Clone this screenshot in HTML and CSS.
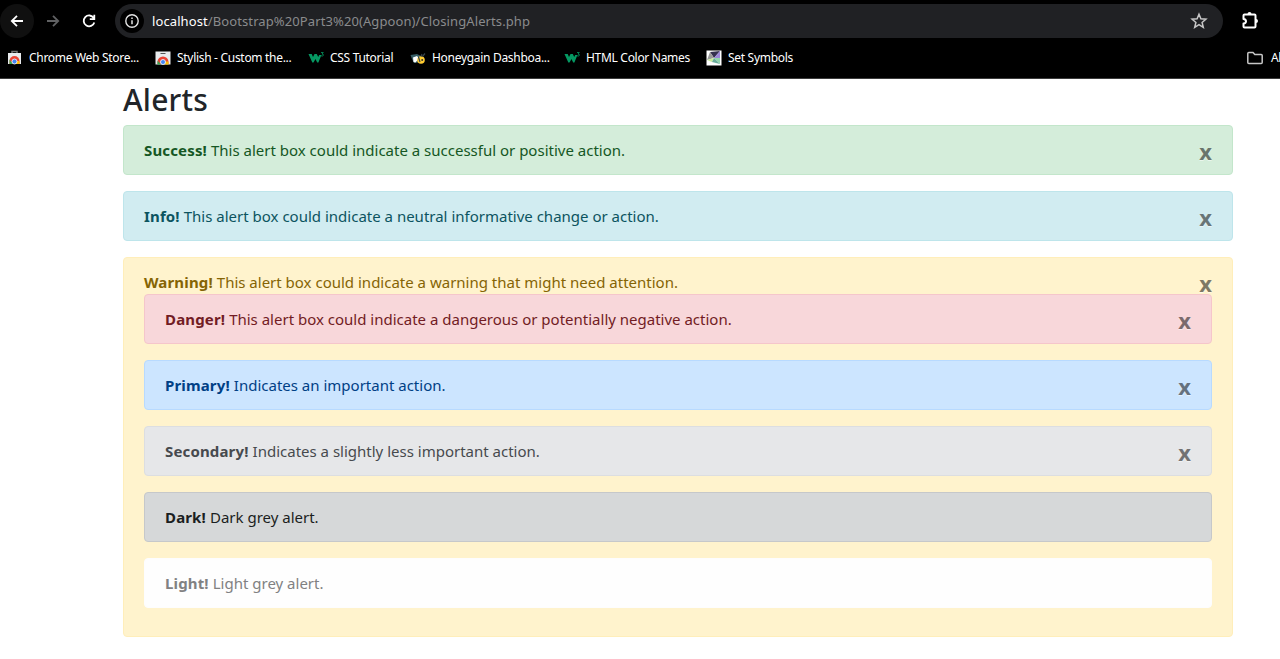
FILE: index.html
```html
<!DOCTYPE html>
<html lang="en">
<head>
<meta charset="utf-8">
<title>Alerts</title>
<link rel="stylesheet" href="styles.css">
</head>
<body>
<header class="browser">
  <div class="toolbar">
    <span class="nav-btn nav-back"><svg width="16" height="16" viewBox="0 0 16 16"><path d="M14 8H3M8 2.800 2.800 8 8 13.200" fill="none" stroke="#fff" stroke-width="1.800"/></svg></span>
    <span class="nav-btn"><svg width="16" height="16" viewBox="0 0 16 16"><path d="M2 8h11M8 2.800 13.200 8 8 13.200" fill="none" stroke="#606163" stroke-width="1.800"/></svg></span>
    <span class="nav-btn"><svg width="16" height="16" viewBox="0 0 16 16"><path d="M12.700 5A5.400 5.400 0 1 0 13.300 9.400M13.300 1.800V6.200H8.800" fill="none" stroke="#fff" stroke-width="1.800"/></svg></span>
    <div class="omnibox">
      <span class="site-info"><svg width="16" height="16" viewBox="0 0 16 16"><circle cx="8" cy="8" r="6.200" fill="none" stroke="#e3e3e3" stroke-width="1.400"/><path d="M8 7.200v4M8 4.500v1.500" stroke="#e3e3e3" stroke-width="1.500"/></svg></span>
      <span class="url"><span>localhost</span><span class="path">/Bootstrap%20Part3%20(Agpoon)/ClosingAlerts.php</span></span>
      <svg width="18" height="18" viewBox="0 0 18 18"><path d="M9 2.200l1.900 4.600 5 .4-3.800 3.200 1.200 4.900L9 12.700l-4.300 2.600 1.200-4.900L2.100 7.200l5-.4z" fill="none" stroke="#c7c7c7" stroke-width="1.500"/></svg>
    </div>
    <svg class="puzzle" width="20" height="20" viewBox="0 0 20 20"><path d="M4.500 3.500h10q1 0 1 1v11q0 1-1 1h-10q-1 0-1-1v-3q2.500-.3 2.500-2.300t-2.500-2.300V4.500q0-1 1-1z" fill="none" stroke="#fff" stroke-width="2" stroke-linejoin="round"/><path d="M7.500 3a2 2 0 0 1 4 0zM16 8a2 2 0 0 1 0 4z" fill="#fff"/></svg>
  </div>
  <nav class="bookmarks">
    <a class="bm bm1"><svg width="16" height="16" viewBox="0 0 16 16"><path d="M5 3V1.500h5V3" fill="none" stroke="#777" stroke-width="1.500"/><path d="M1 3h13v11H1z" fill="#e8eaed"/><path d="M2.500 14V11a5 5 0 0 1 10 0v3z" fill="#ea4335"/><path d="M2.500 9.500 6 14H2.500z" fill="#34a853"/><path d="M9 11h3.500v3H8z" fill="#fbbc04"/><circle cx="7.500" cy="11.500" r="2.500" fill="#4285f4" stroke="#fff" stroke-width=".8"/></svg><span>Chrome Web Store...</span></a>
    <a class="bm bm2"><svg width="16" height="16" viewBox="0 0 16 16"><path d="M.500 1.500h15v13H.500z" fill="#e8eaed"/><path d="M5.500 3h5v1h-5z" fill="#555"/><path d="M2.500 14V12a5.500 5.500 0 0 1 11 0v2z" fill="#ea4335"/><path d="M2.500 10.500 6 14.500H2.500z" fill="#34a853"/><path d="M10 11.500h3.500v3H9z" fill="#fbbc04"/><circle cx="8" cy="12" r="2.500" fill="#4285f4" stroke="#fff" stroke-width=".8"/></svg><span>Stylish - Custom the...</span></a>
    <a class="bm bm3"><svg width="16" height="16" viewBox="0 0 16 16"><path d="M.500 4h3.200l1.300 3 1.500-3h2.300l1.400 3 1-2h2.200l-3 7.500h-1.200L7.500 9l-2 3.500H4.300z" fill="#059862"/><path d="M13 2.500h2.300l-1.300 1.500q1.800 0 1.300 1.500-.8 1-2.300.3" fill="none" stroke="#059862" stroke-width=".8"/></svg><span>CSS Tutorial</span></a>
    <a class="bm bm4"><svg width="16" height="16" viewBox="0 0 16 16"><path d="M.500 5 7 4l4 2-3 6.500-4 .5-2-4z" fill="#365d65"/><path d="M3 7.500l4-1.500 2 2.500-3.500 4-2-.5z" fill="#fff"/><ellipse cx="11" cy="10" rx="3.800" ry="3.800" fill="#ffcc32"/><path d="M8.500 7l1.500 5M12 4l-1 2.500M15 3.500l-2.500 3" stroke="#34424b" stroke-width="1.200"/><circle cx="12.200" cy="10" r="1" fill="#333"/></svg><span>Honeygain Dashboa...</span></a>
    <a class="bm bm5"><svg width="16" height="16" viewBox="0 0 16 16"><path d="M.500 4h3.200l1.300 3 1.500-3h2.300l1.400 3 1-2h2.200l-3 7.500h-1.200L7.500 9l-2 3.500H4.300z" fill="#059862"/><path d="M13 2.500h2.300l-1.300 1.500q1.800 0 1.300 1.500-.8 1-2.300.3" fill="none" stroke="#059862" stroke-width=".8"/></svg><span>HTML Color Names</span></a>
    <a class="bm bm6"><svg width="16" height="16" viewBox="0 0 16 16"><path d="M.500.500h15v15H.500z" fill="#fff"/><path d="M4 2l10-1-6 7z" fill="#34304f"/><path d="M14 1 8 8l6 0z" fill="#9c88d8"/><path d="M4 2l4 6-7 2z" fill="#9a9a9a"/><path d="M1 10l7-2-2 4z" fill="#c8ee9c"/><path d="M8 8h6v6z" fill="#93d6ae"/><path d="M8 8l6 6-8-2z" fill="#68ac9a"/><path d="M1 10l5 2 8 3z" fill="#c79bd4"/></svg><span>Set Symbols</span></a>
    <a class="bm all"><svg width="18" height="16" viewBox="0 0 18 16"><path d="M1.800 3.500q0-1 1-1H7l1.800 2h6.400q1 0 1 1v7q0 1-1 1H2.800q-1 0-1-1z" fill="none" stroke="#c7c7c7" stroke-width="1.500"/></svg><span>Al</span></a>
  </nav>
</header>
<main class="container">
  <h2>Alerts</h2>
  <div class="alert success"><button class="close">x</button><strong>Success!</strong><span class="msg">This alert box could indicate a successful or positive action.</span></div>
  <div class="alert info"><button class="close">x</button><strong>Info!</strong><span class="msg">This alert box could indicate a neutral informative change or action.</span></div>
  <div class="alert warning"><button class="close">x</button><strong>Warning!</strong><span class="msg">This alert box could indicate a warning that might need attention.</span>
    <div class="alert danger"><button class="close">x</button><strong>Danger!</strong><span class="msg">This alert box could indicate a dangerous or potentially negative action.</span></div>
    <div class="alert primary"><button class="close">x</button><strong>Primary!</strong><span class="msg">Indicates an important action.</span></div>
    <div class="alert secondary"><button class="close">x</button><strong>Secondary!</strong><span class="msg">Indicates a slightly less important action.</span></div>
    <div class="alert dark"><strong>Dark!</strong><span class="msg">Dark grey alert.</span></div>
    <div class="alert light"><strong>Light!</strong><span class="msg">Light grey alert.</span></div>
  </div>
</main>
</body>
</html>
```
FILE: styles.css
```css
* { box-sizing: border-box; }
body { margin: 0; height: 659px; overflow: hidden; background: #fff; color: #212529; font: 15px/24px "Noto Sans", "Open Sans", sans-serif; }
svg { display: block; flex: none; }
.browser { height: 79px; background: #000; border-bottom: 1px solid #3c3c3c; color: #fff; overflow: hidden; }
.toolbar { display: flex; align-items: center; height: 34px; margin-top: 4px; }
.nav-btn { display: flex; align-items: center; justify-content: center; width: 34px; height: 34px; margin-right: 2px; border-radius: 50%; }
.nav-back { background: #101010; }
.omnibox { display: flex; align-items: center; width: 1108px; height: 34px; margin-left: 7px; padding: 0 15px 0 5px; border-radius: 17px; background: #202124; }
.site-info { display: flex; align-items: center; justify-content: center; width: 24px; height: 24px; border-radius: 50%; background: #000; }
.url { display: flex; flex: 1; margin-left: 8px; font-size: 13px; letter-spacing: .1px; white-space: pre; }
.path { color: #8a8b8d; }
.puzzle { margin-left: 17px; }
.bookmarks { display: flex; align-items: center; height: 40px; font-size: 12px; line-height: 16px; letter-spacing: -.3px; white-space: pre; }
.bm { display: flex; align-items: center; gap: 6px; flex: none; }
.bm1 { margin-left: 7px; width: 148px; }
.bm2 { width: 153px; }
.bm3 { width: 102px; }
.bm4 { width: 154px; }
.bm5 { width: 142px; }
.bm6 { width: 540px; }
.all { gap: 7px; }
.container { width: 1110px; margin-left: 123px; }
h2 { height: 38px; margin: 0 0 8px; font-size: 30px; line-height: 42px; font-weight: 500; letter-spacing: .2px; }
.alert { height: 50px; margin-bottom: 16px; padding: 12px 20px; border: 1px solid; border-radius: 4px; white-space: nowrap; }
.alert strong { letter-spacing: .15px; }
.msg { margin-left: 4px; }
.close { float: right; padding: 0; border: 0; background: none; color: #000; opacity: .5; font: bold 22px/26px "Noto Sans", sans-serif; text-shadow: 0 1px 0 #fff; }
.success { color: #155724; background: #d4edda; border-color: #c3e6cb; }
.info { color: #0c5460; background: #d1ecf1; border-color: #bee5eb; }
.warning { height: 380px; color: #856404; background: #fff3cd; border-color: #ffeeba; }
.danger { color: #721c24; background: #f8d7da; border-color: #f5c6cb; }
.warning > .alert { clear: none; }
/* The warning's own close button is out of the flow of the alerts nested below it. */
.warning > .close { height: 24px; }
.primary { color: #004085; background: #cce5ff; border-color: #b8daff; }
.secondary { color: #464a4e; background: #e6e7e9; border-color: #dcdee1; }
.dark { color: #1b1e21; background: #d6d8d9; border-color: #c6c8ca; }
.light { color: #818182; background: #fefefe; border-color: #fdfdfe; }
```
